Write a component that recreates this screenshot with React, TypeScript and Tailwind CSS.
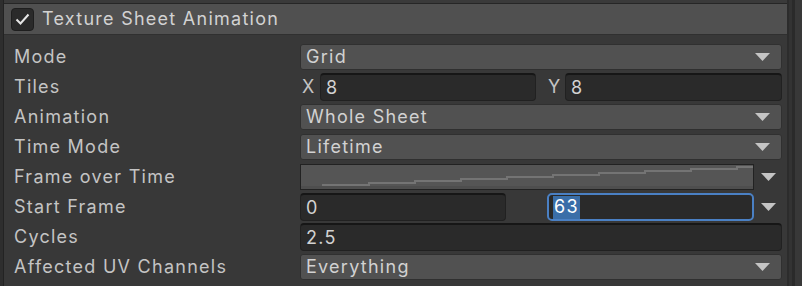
import React from 'react';

const font = { fontFamily: 'Inter, "Noto Sans", sans-serif' };

function Arrow() {
  return (
    <svg width="15" height="8" viewBox="0 0 15 8" className="shrink-0">
      <polygon points="0,0 15,0 7.5,8" fill="#c4c4c4" />
    </svg>
  );
}

function Dropdown({ value }: { value: string }) {
  return (
    <div className="flex-1 h-[26px] flex items-center justify-between pl-[5px] pr-[11px] bg-[#515151] border border-[#303030] rounded-[3px] text-[#d2d2d2]">
      <span>{value}</span>
      <Arrow />
    </div>
  );
}

function TextField({ value, className = '' }: { value: string; className?: string }) {
  return (
    <div className={`h-[28px] flex items-center pl-[5px] bg-[#2a2a2a] border border-[#212121] border-t-[#161616] border-t-2 rounded-[4px] text-[#d2d2d2] ${className}`}>
      {value}
    </div>
  );
}

function CurveField() {
  // stepped frame-over-time curve
  const pts: string[] = ['0,22', '22,22', '22,20'];
  let x = 22;
  let y = 20;
  for (let i = 0; i < 9; i++) {
    x += 46;
    pts.push(`${x},${y}`);
    y -= 2;
    pts.push(`${x},${y}`);
  }
  pts.push(`454,${y}`);
  return (
    <div className="flex-1 h-[26px] bg-[#555555] border border-[#222222] overflow-hidden">
      <svg width="454" height="24" viewBox="0 0 454 24" className="block">
        <polyline points={pts.join(' ')} fill="none" stroke="#747474" strokeWidth="2" />
        <rect x="0" y="21" width="454" height="3" fill="#4e4e4e" />
      </svg>
    </div>
  );
}

function Row({ label, children }: { label: string; children: React.ReactNode }) {
  return (
    <div className="h-[30px] flex items-center">
      <div className="w-[296px] shrink-0 pl-[10px] text-[#c4c4c4]">{label}</div>
      <div className="w-[482px] flex items-center">{children}</div>
    </div>
  );
}

export default function App() {
  return (
    <div className="w-[802px] h-[286px] bg-[#383838] flex text-[18px] leading-none tracking-[0.07em] overflow-hidden" style={font}>
      {/* left gutter */}
      <div className="w-[4px] shrink-0 bg-[#2e2e2e] border-r border-[#232323]" />

      {/* main panel */}
      <div className="w-[783px] shrink-0 flex flex-col">
        <div className="h-[3px] bg-[#3a3a3a]" />
        {/* header */}
        <div className="h-[32px] flex items-center pl-[7px] bg-[#505050] border-t border-[#262626] border-b border-b-[#303030]">
          <div className="w-[23px] h-[23px] rounded-[4px] bg-[#2a2a2a] border border-[#1e1e1e] flex items-center justify-center">
            <svg width="15" height="12" viewBox="0 0 15 12">
              <polyline points="1.5,6.5 5.5,10.5 13.5,1.5" fill="none" stroke="#e6e6e6" strokeWidth="2" />
            </svg>
          </div>
          <span className="ml-[8px] text-[#d2d2d2]">Texture Sheet Animation</span>
        </div>

        <div className="pt-[7px] flex flex-col">
          <Row label="Mode">
            <Dropdown value="Grid" />
          </Row>
          <Row label="Tiles">
            <span className="w-[20px] pl-[2px] text-[#c4c4c4]">X</span>
            <TextField value="8" className="w-[216px]" />
            <span className="ml-[12px] w-[17px] text-[#c4c4c4]">Y</span>
            <TextField value="8" className="flex-1" />
          </Row>
          <Row label="Animation">
            <Dropdown value="Whole Sheet" />
          </Row>
          <Row label="Time Mode">
            <Dropdown value="Lifetime" />
          </Row>
          <Row label="Frame over Time">
            <CurveField />
            <div className="w-[28px] flex justify-center">
              <Arrow />
            </div>
          </Row>
          <Row label="Start Frame">
            <TextField value="0" className="w-[206px]" />
            <div className="ml-[41px] w-[207px] h-[28px] flex items-center pl-[4px] bg-[#2a2a2a] border-2 border-[#4a80c4] rounded-[5px] text-white">
              <span className="bg-[#3a6ea8] h-[23px] flex items-center px-[1px]">63</span>
            </div>
            <div className="w-[28px] flex justify-center">
              <Arrow />
            </div>
          </Row>
          <Row label="Cycles">
            <TextField value="2.5" className="flex-1" />
          </Row>
          <Row label="Affected UV Channels">
            <Dropdown value="Everything" />
          </Row>
        </div>
      </div>

      {/* right gutter */}
      <div className="flex-1 flex">
        <div className="w-[2px] bg-[#2c2c2c]" />
        <div className="w-[3px] bg-[#333333]" />
        <div className="w-[3px] bg-[#2a2a2a]" />
        <div className="flex-1 bg-[#383838]" />
      </div>
    </div>
  );
}
